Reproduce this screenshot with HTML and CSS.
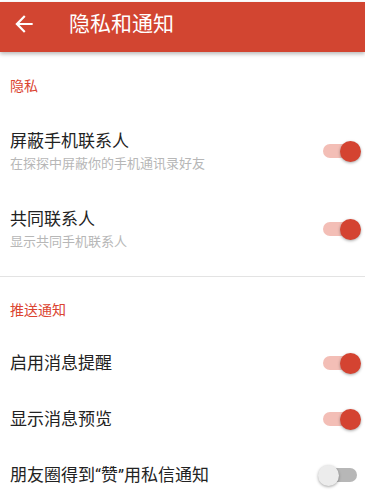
FILE: index.html
```html
<!DOCTYPE html>
<html lang="zh-CN">
<head>
<meta charset="utf-8">
<title>隐私和通知</title>
<link rel="stylesheet" href="styles.css">
</head>
<body>
<header class="appbar">
  <svg class="back" viewBox="0 0 24 24" width="26" height="26"><path d="M20 11H7.83l5.59-5.59L12 4l-8 8 8 8 1.41-1.41L7.83 13H20v-2z" fill="#fff"/></svg>
  <h1 class="title">隐私和通知</h1>
</header>
<main>
  <section>
    <div class="sec-head first">隐私</div>
    <div class="row two">
      <div class="texts">
        <div class="label">屏蔽手机联系人</div>
        <div class="sub">在探探中屏蔽你的手机通讯录好友</div>
      </div>
      <div class="switch on"><span class="track"></span><span class="thumb"></span></div>
    </div>
    <div class="row two">
      <div class="texts">
        <div class="label">共同联系人</div>
        <div class="sub">显示共同手机联系人</div>
      </div>
      <div class="switch on"><span class="track"></span><span class="thumb"></span></div>
    </div>
  </section>
  <div class="divider"></div>
  <section>
    <div class="sec-head second">推送通知</div>
    <div class="row one">
      <div class="label">启用消息提醒</div>
      <div class="switch on"><span class="track"></span><span class="thumb"></span></div>
    </div>
    <div class="row one">
      <div class="label">显示消息预览</div>
      <div class="switch on"><span class="track"></span><span class="thumb"></span></div>
    </div>
    <div class="row one">
      <div class="label">朋友圈得到“赞”用私信通知</div>
      <div class="switch off"><span class="track"></span><span class="thumb"></span></div>
    </div>
  </section>
</main>
</body>
</html>
```
FILE: styles.css
```css
html, body {
  margin: 0;
  padding: 0;
  background: #fff;
  font-family: Roboto, "Noto Sans CJK SC", sans-serif;
  overflow: hidden;
}
body {
  padding-top: 2px;
}
.appbar {
  height: 50px;
  background: #d24531;
  display: flex;
  align-items: flex-start;
  padding-top: 0;
  box-shadow: 0 2px 4px rgba(0,0,0,0.28);
  position: relative;
  z-index: 1;
}
.back {
  margin: 9px 0 0 11px;
  flex: none;
}
.title {
  margin: 8px 0 0 32px;
  font-size: 21px;
  line-height: 28px;
  font-weight: 400;
  color: #fff;
}
.sec-head {
  font-size: 14px;
  line-height: 20px;
  color: #db4431;
  padding: 0 10px;
}
.sec-head.first {
  padding-top: 24px;
  padding-bottom: 24px;
}
.sec-head.second {
  padding-top: 23px;
  padding-bottom: 15px;
}
.row {
  display: flex;
  align-items: center;
  justify-content: space-between;
  padding: 0 5px 0 10px;
}
.row.two {
  padding-top: 9px;
  padding-bottom: 25px;
}
.row.one {
  height: 56px;
}
.label {
  font-size: 17px;
  line-height: 24px;
  color: #222;
}
.sub {
  margin-top: 2px;
  font-size: 13px;
  line-height: 18px;
  color: #b7b7b7;
}
.divider {
  height: 1px;
  background: #e3e3e3;
}
.switch {
  position: relative;
  width: 40px;
  height: 20px;
  flex: none;
}
.track {
  position: absolute;
  left: 3px;
  right: 3px;
  top: 3px;
  height: 14px;
  border-radius: 7px;
}
.thumb {
  position: absolute;
  top: -0.5px;
  width: 21px;
  height: 21px;
  border-radius: 50%;
  box-shadow: 0 1px 3px rgba(0,0,0,0.35);
}
.switch.on .track { background: #f3beb6; }
.switch.on .thumb { left: 19.5px; background: #d44331; }
.switch.off .track { background: #b7b7b7; }
.switch.off .thumb { left: -2.5px; background: #ececec; }
```
